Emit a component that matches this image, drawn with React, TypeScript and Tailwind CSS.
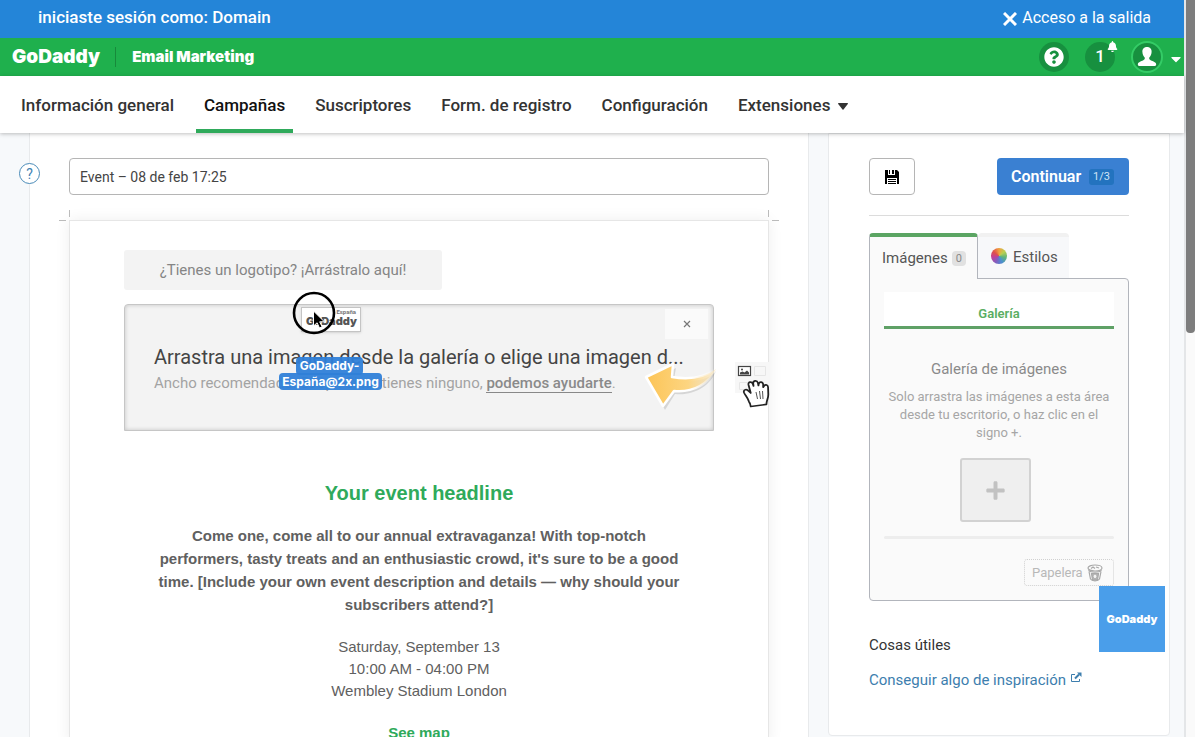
import React from 'react';
import { FaCaretDown, FaBell, FaQuestionCircle, FaPlus } from 'react-icons/fa';

const NAV_ITEMS = [
  { label: 'Información general' },
  { label: 'Campañas', active: true },
  { label: 'Suscriptores' },
  { label: 'Form. de registro' },
  { label: 'Configuración' },
  { label: 'Extensiones', menu: true },
];

function SessionBar() {
  return (
    <div className="flex h-[38px] shrink-0 items-center justify-between bg-[#2485d8] pb-[2px] pl-[38px] pr-[33px] text-white">
      <span className="text-[17px] font-medium">iniciaste sesión como: Domain</span>
      <a href="#salida" className="flex items-center gap-[5px] text-base">
        <svg viewBox="0 0 14 14" className="mt-[2px] size-[14px]" fill="none" stroke="currentColor" strokeWidth="3">
          <path d="M1 1l12 12M13 1 1 13" />
        </svg>
        Acceso a la salida
      </a>
    </div>
  );
}

function BrandBar() {
  return (
    <header className="flex h-[38px] shrink-0 items-center justify-between bg-[#1fb04d] pl-3 text-white">
      <div className="flex items-center">
        <a href="#inicio" className="font-[Inter] text-[19px] font-black leading-6">GoDaddy</a>
        <span className="ml-[15px] mr-4 h-5 w-px bg-[#178a3b]" />
        <span className="font-[Inter] text-[15px] font-black leading-6">Email Marketing</span>
      </div>
      <div className="flex items-center pb-px">
        <button aria-label="Ayuda" className="flex size-[30px] items-center justify-center rounded-full bg-[#17903f]">
          <FaQuestionCircle className="size-5" />
        </button>
        <button aria-label="Notificaciones" className="relative ml-4 flex size-[30px] items-center justify-center rounded-full bg-[#17903f] text-[17px] font-medium">
          1
          <FaBell className="absolute -right-[3px] -top-px size-[11px]" />
        </button>
        <button aria-label="Cuenta" className="ml-4 flex items-center">
          <span className="flex size-8 items-center justify-center rounded-full border-2 border-[#34cc66] bg-[#17903f]">
            <svg viewBox="0 0 20 20" className="size-5 fill-white">
              <path d="M10 0C6.8 0 5.2 2.2 5.4 5c.1 2.400 1.200 4.500 2.300 5.600.4 1.400-.2 2.200-1.700 2.800C3 14.600.8 15.300.8 17.200c0 1.300.9 1.800 2.200 1.800h14c1.300 0 2.200-.5 2.200-1.800 0-1.900-2.200-2.600-5.200-3.800-1.500-.6-2.100-1.400-1.700-2.800C13.400 9.500 14.500 7.400 14.600 5 14.800 2.200 13.200 0 10 0Z" />
            </svg>
          </span>
          <FaCaretDown className="ml-[5px] mt-1 size-4" />
        </button>
      </div>
    </header>
  );
}

function MainNav() {
  return (
    <nav className="relative z-10 flex h-[57px] shrink-0 gap-[14px] bg-white pl-[13px] text-[17px] font-medium text-[#333] shadow-[0_1px_4px_rgba(0,0,0,0.25)]">
      {NAV_ITEMS.map((item) => (
        <a
          key={item.label}
          href="#"
          className={`flex items-center gap-2 border-b-4 px-2 pt-[6px] ${item.active ? 'border-[#2faa5b] text-[#111]' : 'border-transparent'}`}
        >
          {item.label}
          {item.menu && (
            <svg viewBox="0 0 10 7" className="mt-[2px] h-[7px] w-[10px] fill-current">
              <path d="M.5 0h9q.7.3.3 1L5.500 6.500q-.5.500-1 0L.2 1Q-.1.300.5 0Z" />
            </svg>
          )}
        </a>
      ))}
    </nav>
  );
}

function DragPreview() {
  return (
    <div className="absolute -top-[14px] left-[153px] h-[100px] w-[106px]">
      <div className="absolute left-[23px] top-4 h-[25px] w-[60px] border border-[#c4c4c4] bg-white px-1 text-right shadow-sm">
        <div className="text-[6px] font-bold leading-[7px] text-[#777]">España</div>
        <div className="font-[Inter] text-[11px] font-black leading-[12px] text-[#555]">GoDaddy</div>
      </div>
      <svg viewBox="0 0 44 44" className="absolute left-[14px] top-0 size-11">
        <circle cx="22" cy="22" r="20" fill="none" stroke="#000" strokeWidth="2.600" />
        <path d="M21.500 20v15l3.600-3.200 2.400 5.200 2.600-1.200-2.400-5h4.700Z" fill="#000" stroke="#fff" strokeWidth="1" />
      </svg>
      <div className="absolute left-[18px] top-[66px] h-[18px] w-[67px] rounded bg-[#2f7fd8]/95 text-center font-[Inter] text-[12px] font-bold leading-[18px] text-white">
        GoDaddy-
      </div>
      <div className="absolute left-[1px] top-[82px] h-[17px] w-[103px] rounded bg-[#2f7fd8]/95 text-center font-[Inter] text-[12px] font-bold leading-[17px] text-white">
        España@2x.png
      </div>
    </div>
  );
}

function DropHint() {
  return (
    <div className="absolute left-[520px] top-[50px]">
      <svg viewBox="0 0 132 60" className="h-[60px] w-[132px] overflow-visible">
        <defs>
          <linearGradient id="arrow" x1="0" x2="1" y1="0" y2="0">
            <stop offset="0" stopColor="#fcc456" />
            <stop offset="0.600" stopColor="#fdd581" />
            <stop offset="1" stopColor="#fde9bf" stopOpacity="0.600" />
          </linearGradient>
          <linearGradient id="arrow-edge" x1="0" x2="1" y1="0" y2="0">
            <stop offset="0.650" stopColor="#fff" />
            <stop offset="1" stopColor="#fff" stopOpacity="0" />
          </linearGradient>
        </defs>
        <path d="M4 26 31 13l-2 11c18 4 33 2 42-8-6 15-22 25-41 23l-10 16Z" fill="#000" opacity="0.120" />
        <path d="M1 22 28 9l-1 13c18 3 33 0 44-8-7 14-22 24-42 22L18 51Z" fill="url(#arrow)" stroke="url(#arrow-edge)" strokeWidth="2.500" strokeLinejoin="round" />
        <rect x="90" y="7" width="34" height="31" fill="#f7f7f7" />
        <path d="M109.500 11.500h11v9h-11zM94.500 27.500h11v7h-11z" fill="none" stroke="#e6e6e6" />
        <rect x="93.500" y="11.500" width="12" height="9" fill="#fff" stroke="#444" strokeWidth="1.200" />
        <path d="M95 19.500v-2l2.500-1 2 1 2.500-2 2 2v2Z" fill="#444" />
        <circle cx="97" cy="14.500" r="1" fill="#444" />
        <path
          d="M104.500 46c-1.500-5-3.500-6-4.500-9-.8-3 2.500-3.500 4-1.500l2 2-2-8c-.5-3 3-3.300 3.800-.8l.7 2-.3-2.500c0-3 3.600-3 4.200-.4l.5 2.500.3-1.800c.8-2.300 3.700-1.800 3.900.5v3l.9-1.500c1.300-1.600 3.500-.6 3.500 1.500l.2 7c0 4-1.500 5-1.700 9.500l-14 2c-.2-2-.6-3.500-1.500-4.500Z"
          transform="translate(-13 -1) scale(1.120 1.040)"
          fill="#fff"
          stroke="#222"
          strokeWidth="1.600"
          strokeLinejoin="round"
        />
        <path d="M111 37l1.500 7m2-8 1 8m2-8 .5 8" stroke="#555" fill="none" />
      </svg>
    </div>
  );
}

function Editor() {
  return (
    <main className="relative flex min-w-0 flex-1 flex-col border-x border-[#e8eaec] bg-white px-[39px] pt-[25px]">
      <button aria-label="Ayuda de campaña" className="absolute -left-[11px] top-[30px] size-[21px] rounded-full border border-[#4a8bb8] bg-white text-sm leading-[18px] text-[#3f82b3]">
        ?
      </button>
      <input
        aria-label="Nombre de la campaña"
        defaultValue="Event – 08 de feb 17:25"
        className="h-[37px] w-full shrink-0 rounded border border-[#b5b5b5] px-[10px] text-sm text-[#444]"
      />

      <div className="relative mt-[25px] flex flex-1 flex-col border border-b-0 border-[#e6e6e6] bg-white px-[54px] pt-[29px] shadow-[0_0_14px_rgba(0,0,0,0.07)]">
        {/* crop marks */}
        <span className="absolute -left-px -top-[11px] h-[7px] w-px bg-[#bbb]" />
        <span className="absolute -left-[11px] -top-px h-px w-[7px] bg-[#bbb]" />
        <span className="absolute -right-px -top-[11px] h-[7px] w-px bg-[#bbb]" />
        <span className="absolute -right-[11px] -top-px h-px w-[7px] bg-[#bbb]" />

        <div className="flex h-10 w-[318px] shrink-0 items-center justify-center rounded-[3px] bg-[#f3f3f3] text-[15px] text-[#858585]">
          ¿Tienes un logotipo? ¡Arrástralo aquí!
        </div>

        <div className="relative mt-[14px] h-[127px] shrink-0 rounded-t border border-[#c6c6c6] bg-[#f3f3f3] pl-[29px] pt-[40px] shadow-[inset_0_0_4px_rgba(0,0,0,0.2)]">
          <button aria-label="Cerrar" className="absolute right-[5px] top-[4px] flex h-[30px] w-[43px] items-center justify-center bg-[#fafafa] text-[#777]">
            <svg viewBox="0 0 8 8" className="size-2" fill="none" stroke="currentColor" strokeWidth="1.200">
              <path d="M1 1l6 6M7 1 1 7" />
            </svg>
          </button>
          <h2 className="whitespace-nowrap text-[20px] leading-6 text-[#444]">
            Arrastra una imagen desde la galería o elige una imagen d...
          </h2>
          <p className="whitespace-nowrap pt-1 text-[15px] leading-5 text-[#a3a3a3]">
            Ancho recomendado: 590px Si no tienes ninguno,{' '}
            <a href="#ayuda" className="border-b border-[#888] font-medium text-[#8a8a8a]">podemos ayudarte</a>.
          </p>
          <DragPreview />
          <DropHint />
        </div>

        <div className="flex flex-col items-center pt-[48px] text-center font-['Liberation_Sans',sans-serif] text-[#606060]">
          <h1 className="text-[20px] font-bold leading-7 text-[#2faa5b]">Your event headline</h1>
          <p className="w-[530px] pt-[17px] text-[15px] font-bold leading-[23px]">
            Come one, come all to our annual extravaganza! With top-notch performers, tasty treats and an enthusiastic crowd, it's sure to be a good time. [Include your own event description and details — why should your subscribers attend?]
          </p>
          <p className="pt-5 text-[15px] leading-[22px]">
            Saturday, September 13
            <br />
            10:00 AM - 04:00 PM
            <br />
            Wembley Stadium London
          </p>
          <a href="#mapa" className="pt-5 text-[15px] font-bold leading-[22px] text-[#2faa5b]">See map</a>
        </div>
      </div>
    </main>
  );
}

function TrashIcon() {
  return (
    <svg viewBox="0 0 16 18" className="h-[18px] w-4" fill="none" stroke="#a8a8a8" strokeWidth="1.200">
      <ellipse cx="8" cy="4" rx="7" ry="3" />
      <path d="M4 4.500 6 3l2 1.500M9 3l3 1" />
      <path d="M1.500 6c2 3 11 3 13 0M2 7.500 3.500 15c1.500 2.400 7.500 2.400 9 0L14 7.500" />
      <path d="M4.500 9.500 5.500 16h5l1-6.500Z" fill="#b4b4b4" />
      <path d="M8 10.500 6 12.500h1.200V14h1.600v-1.500H10Z" fill="#fafafa" stroke="none" />
    </svg>
  );
}

function GalleryPanel() {
  return (
    <section>
      <div className="flex" role="tablist">
        <button role="tab" aria-selected="true" className="relative z-10 -mb-px flex h-[46px] w-[109px] items-center gap-1 rounded-t border border-b-0 border-t-4 border-[#b2b5bc] border-t-[#5ba563] bg-[#fafafa] pl-3 pt-px text-[15px] text-[#555]">
          Imágenes
          <span className="rounded-sm bg-[#e1e1e1] px-1 text-[11px] leading-[15px] text-[#888]">0</span>
        </button>
        <button role="tab" aria-selected="false" className="flex h-[45px] w-[91px] items-center gap-[6px] rounded-t border-t-4 border-[#f1f1f1] bg-[#f7f8fa] pl-[13px] text-[15px] text-[#555]">
          <span className="mb-[3px] size-4 rounded-full bg-[conic-gradient(#f0a040,#b9cf50,#5fb37b,#4a8fd0,#7f5fc0,#c0409a,#e0504a,#f0a040)]" />
          Estilos
        </button>
      </div>

      <div className="flex flex-col rounded-b rounded-tr border border-[#b2b5bc] bg-[#fafafa] px-[14px] pb-[14px] pt-[13px] text-center">
        <h3 className="h-[37px] border-b-[3px] border-[#5fa166] bg-white pt-3 text-[13px] font-semibold leading-5 text-[#5aae63]">Galería</h3>
        <h4 className="pt-[30px] text-[15px] leading-5 text-[#8a8a8a]">Galería de imágenes</h4>
        <p className="pt-[9px] text-[13px] leading-[18px] text-[#a6a6a6]">
          Solo arrastra las imágenes a esta área
          <br />
          desde tu escritorio, o haz clic en el
          <br />
          signo +.
        </p>
        <button aria-label="Agregar imagen" className="mr-2 mt-4 flex h-16 w-[71px] items-center justify-center self-center rounded-[3px] border-2 border-[#d2d2d2] bg-[#efefef] text-[#c2c2c2]">
          <FaPlus className="size-[21px]" />
        </button>
        <div className="mt-[14px] h-[3px] rounded bg-[#ededed]" />
        <button className="mt-5 flex h-[27px] w-[90px] items-center justify-between self-end rounded-[3px] border border-dotted border-[#d0d0d0] pl-[7px] pr-[10px] text-[13px] text-[#b8b8b8]">
          Papelera
          <TrashIcon />
        </button>
      </div>
    </section>
  );
}

function Sidebar() {
  return (
    <aside className="relative mb-px flex w-[342px] shrink-0 flex-col rounded-b border border-[#e8eaec] bg-white px-[40px] pt-6">
      <div className="flex justify-between border-b border-[#dcdcdc] pb-5">
        <button aria-label="Guardar" className="flex h-[37px] w-[46px] items-center justify-center rounded border border-[#b5b5b5] bg-white">
          <svg viewBox="0 0 14 14" className="size-[14px]">
            <path d="M0 0h3v5h7V0h2l2 2v12h-2V8H2v6H0ZM7 0h2v4H7ZM3 9h8v1H3ZM3 11h8v1H3ZM3 13h8v1H3ZM4 0h1v4H4Z" />
          </svg>
        </button>
        <button className="flex h-[37px] w-[132px] items-center justify-between rounded bg-[#3a80d2] pl-[14px] pr-[15px] text-base font-semibold text-white">
          Continuar
          <span className="rounded-[3px] bg-[#2373bf] px-1 text-[11px] font-normal leading-4 text-[#cfe3f6]">1/3</span>
        </button>
      </div>
      <div className="pt-[17px]">
        <GalleryPanel />
      </div>
      <h3 className="pt-[34px] text-[15px] leading-5 text-[#333]">Cosas útiles</h3>
      <a href="#inspiracion" className="flex items-center gap-1 pt-[15px] text-[15px] leading-5 text-[#3d7eae]">
        Conseguir algo de inspiración
        <svg viewBox="0 0 12 12" className="mb-1 size-3" fill="none" stroke="currentColor">
          <path d="M5 2.500H1.500v7h8V7" />
          <path d="M5 6.500 9 2.500" strokeWidth="2" />
          <path d="M7 .5h4.500V5Z" fill="currentColor" stroke="none" />
        </svg>
      </a>
      <div className="absolute right-1 top-[452px] flex size-[66px] items-center justify-center bg-[#4a9eea] font-[Inter] text-[11px] font-black text-white">
        GoDaddy
      </div>
    </aside>
  );
}

export default function App() {
  return (
    <div className="flex h-screen overflow-hidden bg-[#f7f9fb] font-[Roboto,sans-serif]">
      <div className="flex min-w-0 flex-1 flex-col">
        <SessionBar />
        <BrandBar />
        <MainNav />
        <div className="flex min-h-0 flex-1 gap-[19px] overflow-hidden pl-[29px] pr-[14px]">
          <Editor />
          <Sidebar />
        </div>
      </div>
      {/* page scroll track */}
      <div className="w-[11px] shrink-0 border-l-2 border-[#e4e6e8] bg-[#fafafa]">
        <div className="h-[333px] rounded-b bg-[#7d7d7d]" />
      </div>
    </div>
  );
}
